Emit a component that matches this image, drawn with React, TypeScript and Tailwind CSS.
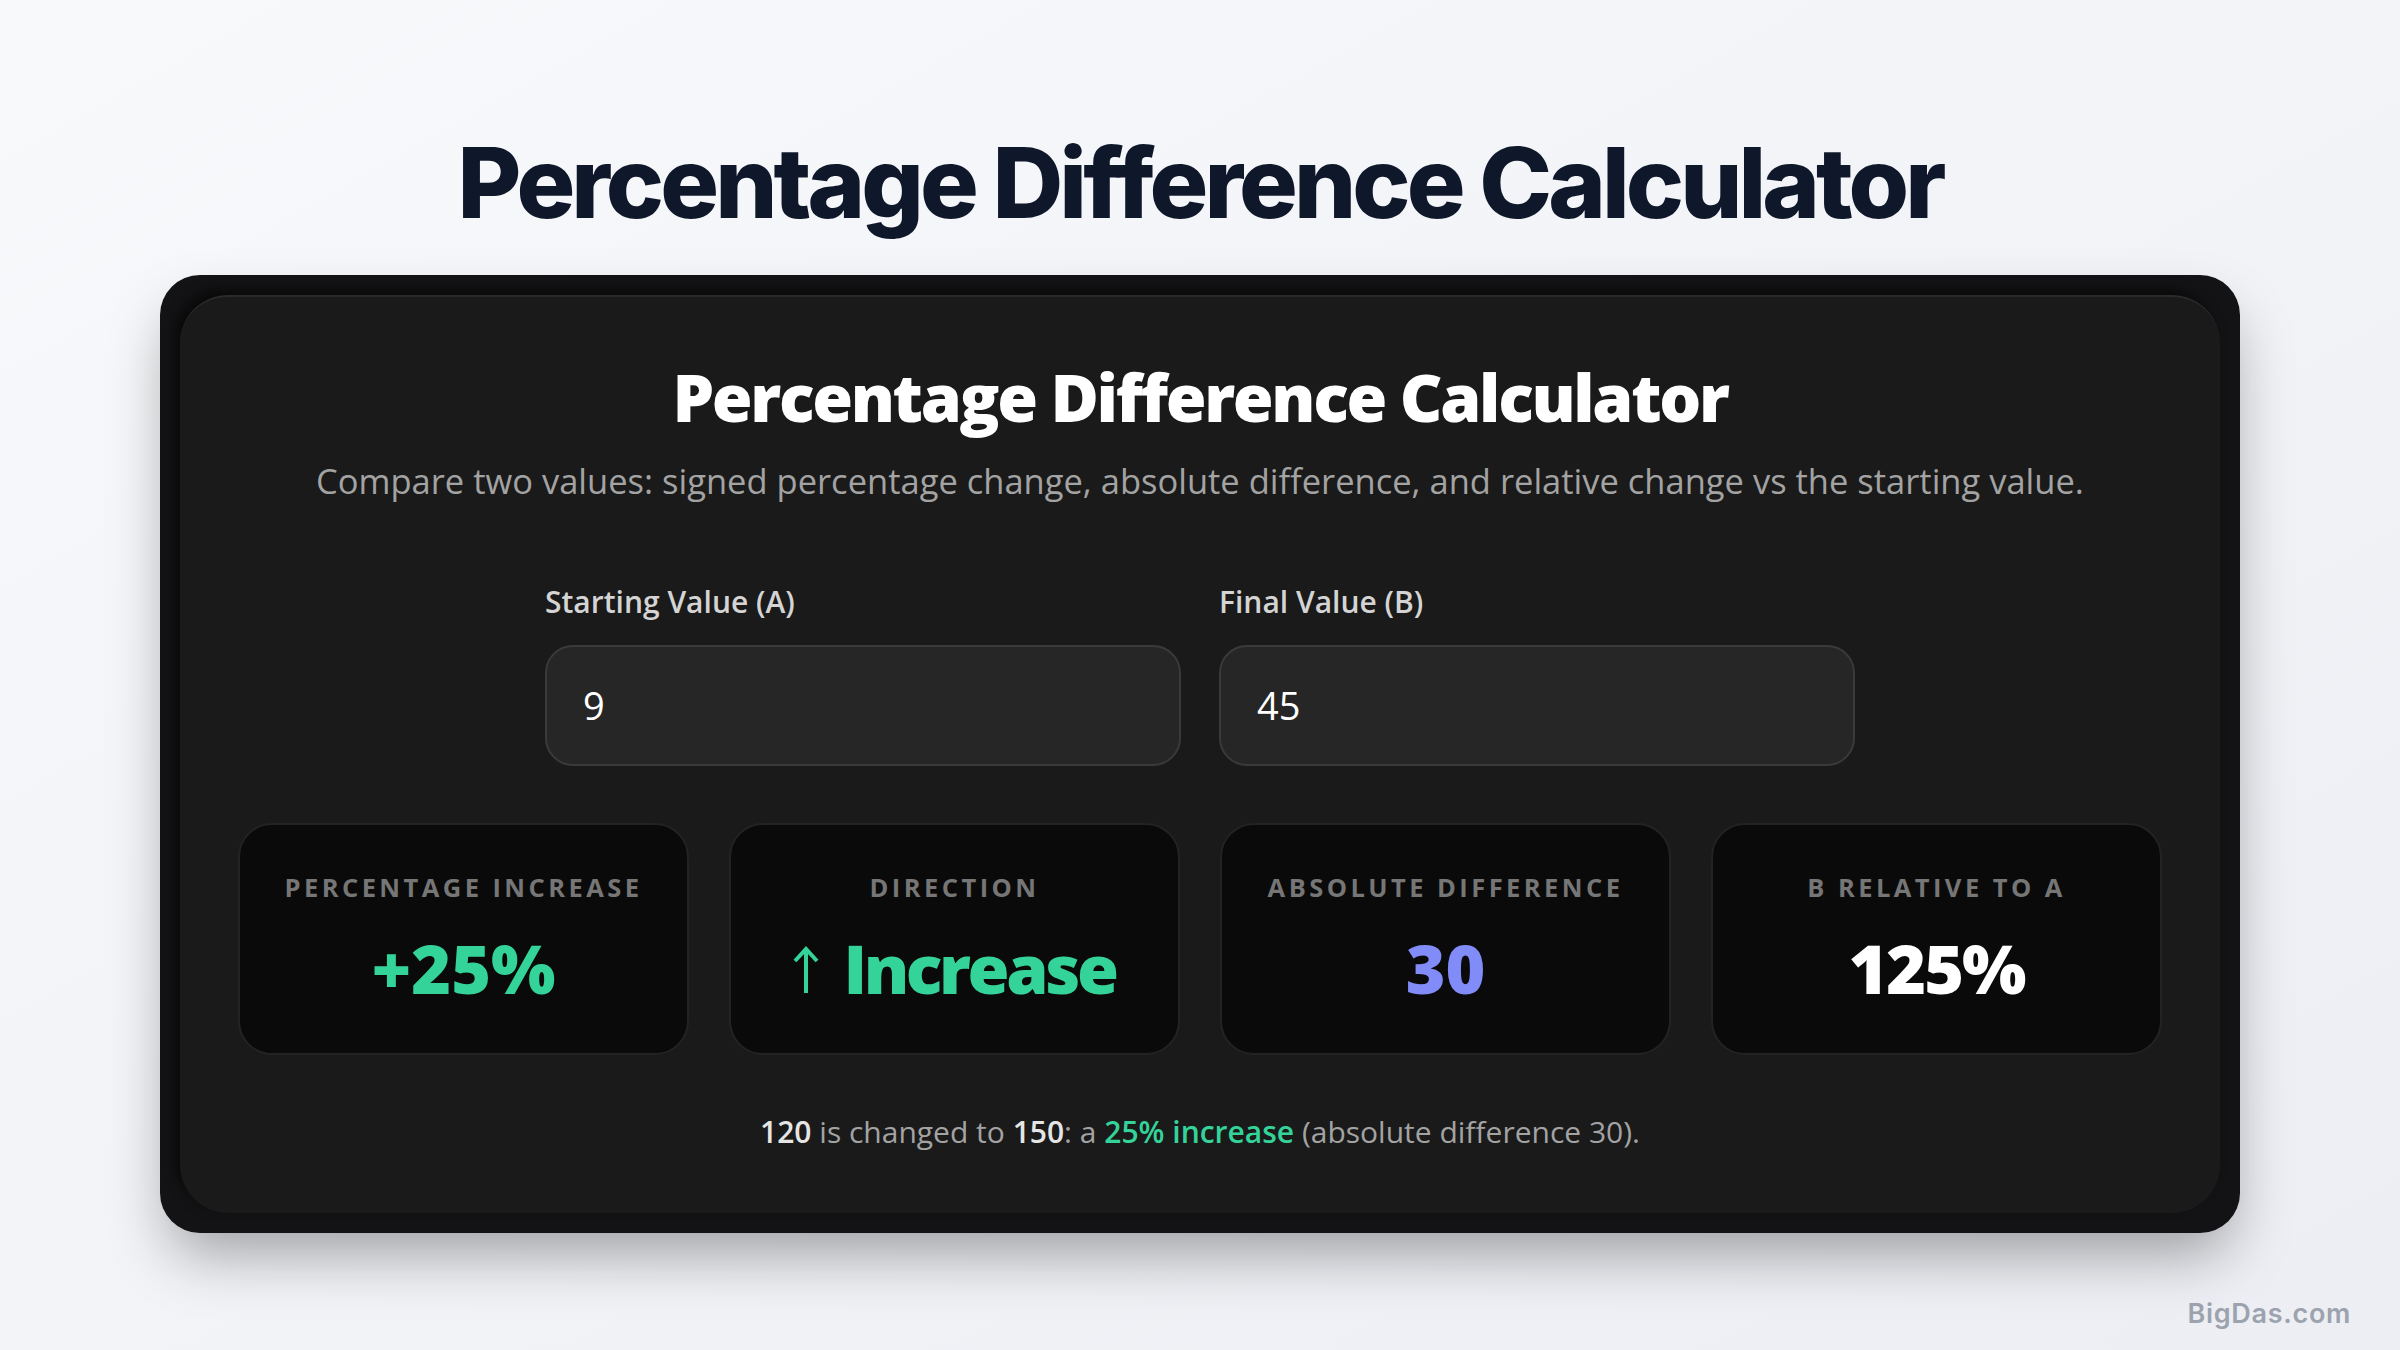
import React from 'react';

const stats = [
  { label: 'Percentage Increase', value: '+25%', tone: 'text-[#34d399]' },
  { label: 'Direction', value: 'Increase', tone: 'text-[#34d399] tracking-[-0.05em]', arrow: true },
  { label: 'Absolute Difference', value: '30', tone: 'text-[#818cf8]' },
  { label: 'B Relative to A', value: '125%', tone: 'text-white tracking-[-0.03em]' },
];

const StatCard: React.FC<{ label: string; value: string; tone: string; arrow?: boolean }> = ({
  label,
  value,
  tone,
  arrow,
}) => (
  <div className="h-[232px] rounded-[34px] border-2 border-[#232323] bg-[#0a0a0a] flex flex-col items-center justify-center gap-[33px]">
    <span className="text-[25.5px] leading-none font-bold uppercase tracking-[0.135em] text-[#767676]">
      {label}
    </span>
    <span className={`text-[68px] leading-none font-extrabold flex items-center ${tone}`}>
      {arrow && (
        <svg width="26" height="50" viewBox="0 0 26 50" className="mr-[24px] mt-[4px]" fill="none" stroke="currentColor" strokeWidth="4">
          <path d="M13 48V4" />
          <path d="M2 16L13 4l11 12" />
        </svg>
      )}
      {value}
    </span>
  </div>
);

export default function App() {
  return (
    <div className="w-[2400px] h-[1350px] overflow-hidden relative bg-gradient-to-br from-[#f8f9fb] to-[#eceef3] flex flex-col items-center pt-[134px] font-['Open_Sans',sans-serif]">
      <h1 className="font-['Inter',sans-serif] text-[98px] leading-none font-extrabold tracking-[-0.04em] text-[#0f172a]">
        Percentage Difference Calculator
      </h1>

      <div className="mt-[43px] w-[2080px] rounded-[40px] bg-[#131315] p-5 shadow-[0_30px_60px_-10px_rgba(0,0,0,0.35)]">
        <div className="rounded-[48px] border-t-2 border-[#2a2a2a] bg-[#1a1a1a] shadow-[-6px_-6px_12px_rgba(0,0,0,0.5)] px-[58px] pt-[66px] pb-[66px] flex flex-col items-center">
          <h2 className="text-[66px] leading-none font-extrabold tracking-[-0.035em] text-white">
            Percentage Difference Calculator
          </h2>
          <p className="mt-[35px] text-[34.5px] leading-none text-[#a3a3a3]">
            Compare two values: signed percentage change, absolute difference, and relative change vs the starting value.
          </p>

          <div className="mt-[88px] w-[1310px] grid grid-cols-2 gap-[38px]">
            <label className="flex flex-col gap-[28px]">
              <span className="text-[30px] leading-none font-semibold text-[#d4d4d4]">Starting Value (A)</span>
              <div className="h-[121px] rounded-[28px] border-2 border-[#3a3a3a] bg-[#262626] flex items-center px-[36px] text-[38px] text-white">
                9
              </div>
            </label>
            <label className="flex flex-col gap-[28px]">
              <span className="text-[30px] leading-none font-semibold text-[#d4d4d4]">Final Value (B)</span>
              <div className="h-[121px] rounded-[28px] border-2 border-[#3a3a3a] bg-[#262626] flex items-center px-[36px] text-[38px] text-white">
                45
              </div>
            </label>
          </div>

          <div className="mt-[57px] w-full grid grid-cols-4 gap-[40px]">
            {stats.map((s) => (
              <StatCard key={s.label} {...s} />
            ))}
          </div>

          <p className="mt-[62px] text-[30px] leading-none text-[#a3a3a3]">
            <span className="font-semibold text-[#e5e5e5]">120</span> is changed to{' '}
            <span className="font-semibold text-[#e5e5e5]">150</span>: a{' '}
            <span className="font-semibold text-[#34d399]">25% increase</span> (absolute difference 30).
          </p>
        </div>
      </div>

      <span className="absolute right-[49px] bottom-[16px] font-['Inter',sans-serif] text-[27px] font-semibold tracking-wide text-[#9ca3af]">
        BigDas.com
      </span>
    </div>
  );
}
